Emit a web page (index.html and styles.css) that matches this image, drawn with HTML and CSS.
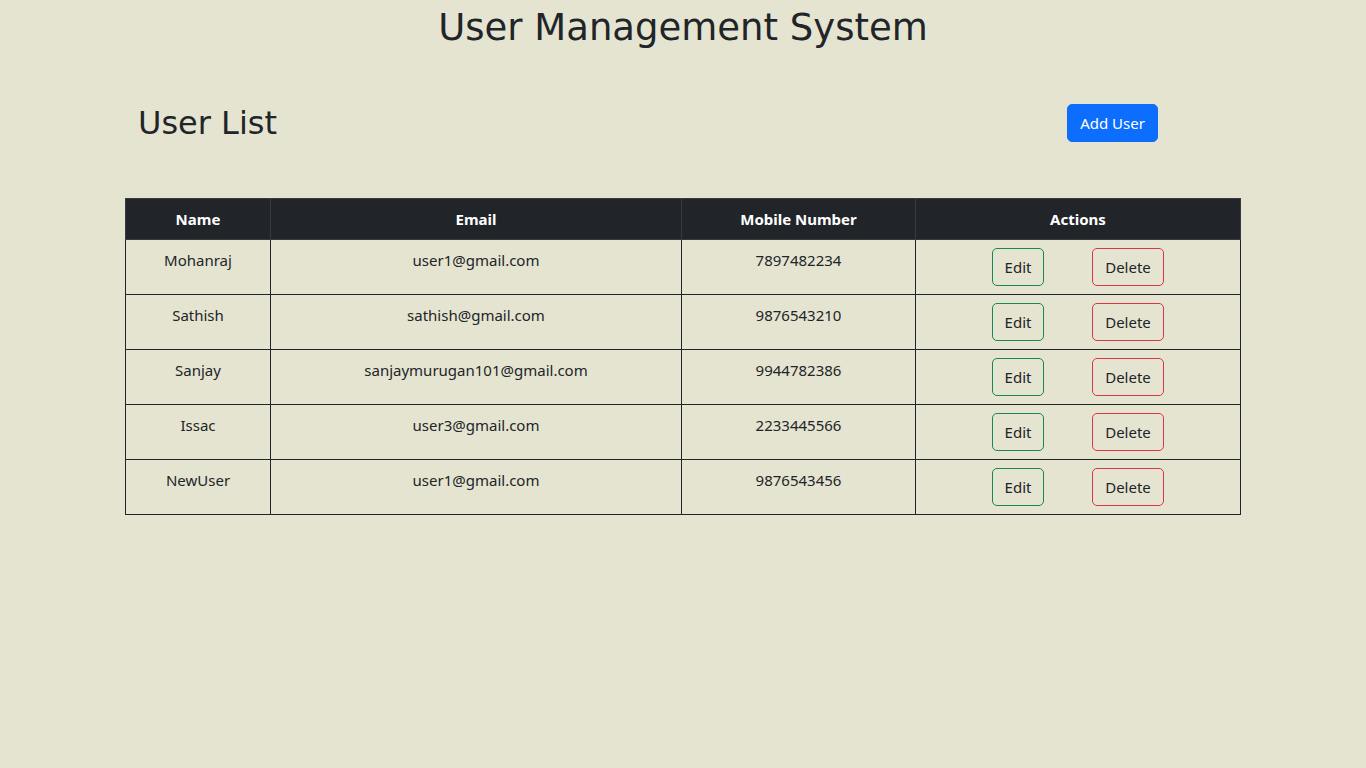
FILE: index.html
```html
<!DOCTYPE html>
<html lang="en">
<head>
<meta charset="utf-8">
<title>User Management System</title>
<link rel="stylesheet" href="styles.css">
</head>
<body>
<h1 class="title">User Management System</h1>
<div class="container">
  <div class="list-header">
    <h2 class="list-title">User List</h2>
    <button class="btn btn-primary">Add User</button>
  </div>
  <table class="user-table">
    <thead>
      <tr>
        <th class="col-name">Name</th>
        <th class="col-email">Email</th>
        <th class="col-mobile">Mobile Number</th>
        <th class="col-actions">Actions</th>
      </tr>
    </thead>
    <tbody>
      <tr>
        <td>Mohanraj</td><td>user1@gmail.com</td><td>7897482234</td>
        <td><button class="btn btn-edit">Edit</button><button class="btn btn-delete">Delete</button></td>
      </tr>
      <tr>
        <td>Sathish</td><td>sathish@gmail.com</td><td>9876543210</td>
        <td><button class="btn btn-edit">Edit</button><button class="btn btn-delete">Delete</button></td>
      </tr>
      <tr>
        <td>Sanjay</td><td>sanjaymurugan101@gmail.com</td><td>9944782386</td>
        <td><button class="btn btn-edit">Edit</button><button class="btn btn-delete">Delete</button></td>
      </tr>
      <tr>
        <td>Issac</td><td>user3@gmail.com</td><td>2233445566</td>
        <td><button class="btn btn-edit">Edit</button><button class="btn btn-delete">Delete</button></td>
      </tr>
      <tr>
        <td>NewUser</td><td>user1@gmail.com</td><td>9876543456</td>
        <td><button class="btn btn-edit">Edit</button><button class="btn btn-delete">Delete</button></td>
      </tr>
    </tbody>
  </table>
</div>
</body>
</html>
```
FILE: styles.css
```css
* { box-sizing: border-box; }
body {
  margin: 0;
  background: #e5e4d0;
  color: #212529;
  font-family: "Noto Sans", "Open Sans", sans-serif;
  font-size: 15px;
  line-height: 24px;
}
.title {
  margin: 0;
  padding-top: 2px;
  text-align: center;
  font-family: "DejaVu Sans", sans-serif;
  font-weight: 400;
  font-size: 37px;
  line-height: 52px;
  color: #212529;
}
.container {
  width: 1116px;
  margin: 0 auto;
}
.list-header {
  display: flex;
  justify-content: space-between;
  align-items: center;
  margin-top: 50px;
  padding: 0 83px 0 13px;
  height: 38px;
}
.list-title {
  margin: 0;
  font-family: "DejaVu Sans", sans-serif;
  font-weight: 400;
  font-size: 32px;
  line-height: 38px;
}
.btn {
  display: inline-block;
  height: 38px;
  padding: 0;
  font-family: inherit;
  font-size: 15px;
  line-height: 24px;
  white-space: nowrap;
  border: 1px solid transparent;
  border-radius: 5px;
  background: transparent;
  color: #212529;
  cursor: pointer;
}
.btn-primary {
  background: #0d6efd;
  border-color: #0d6efd;
  color: #fff;
  width: 91px;
}
.user-table {
  margin-top: 56px;
  width: 100%;
  border-collapse: collapse;
  text-align: center;
}
.user-table th {
  background: #212529;
  color: #fff;
  font-weight: 700;
  padding: 8px;
  height: 41px;
  border: 1px solid #373b3e;
}
.user-table td {
  padding: 8px;
  vertical-align: top;
  border: 1px solid #212529;
  height: 55px;
}
.col-name { width: 145px; }
.col-email { width: 411px; }
.col-mobile { width: 234px; }
.btn-edit {
  border-color: #198754;
  margin: 0 24px;
  width: 52px;
}
.btn-delete {
  border-color: #dc3545;
  margin: 0 24px;
  width: 72px;
}
```
